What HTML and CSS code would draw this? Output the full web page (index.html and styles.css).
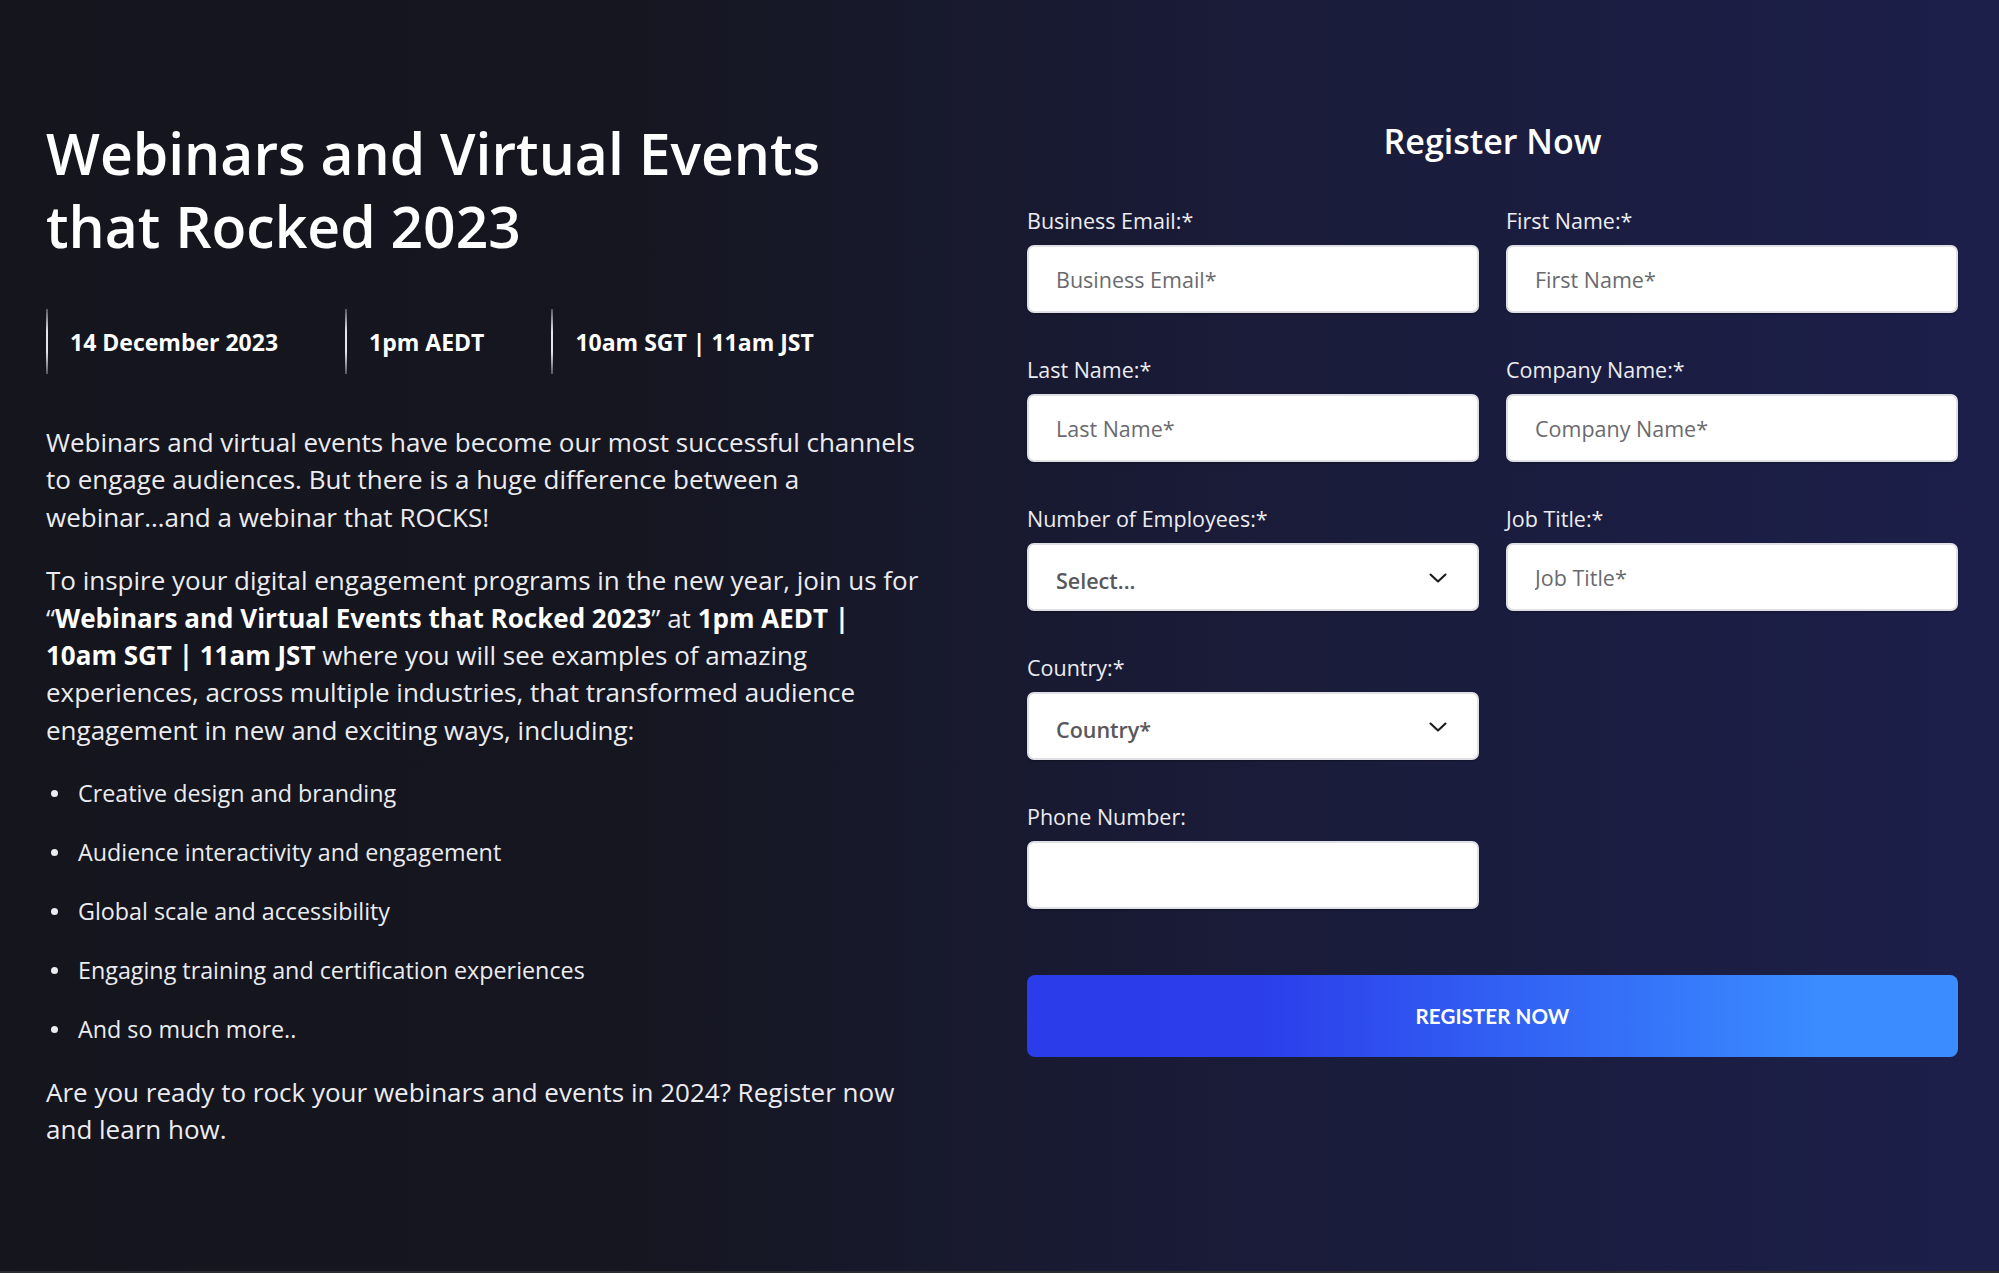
FILE: index.html
```html
<!DOCTYPE html>
<html lang="en">
<head>
<meta charset="utf-8">
<title>Webinars and Virtual Events that Rocked 2023</title>
<link rel="stylesheet" href="styles.css">
</head>
<body>
<main class="page">
  <section class="intro">
    <h1 class="title">Webinars and Virtual Events that Rocked 2023</h1>
    <div class="meta">
      <div class="meta-item">14 December 2023</div>
      <div class="meta-item">1pm AEDT</div>
      <div class="meta-item">10am SGT | 11am JST</div>
    </div>
    <p class="text">Webinars and virtual events have become our most successful channels to engage audiences. But there is a huge difference between a <span class="nowrap">webinar…and</span> a webinar that ROCKS!</p>
    <p class="text">To inspire your digital engagement programs in the new year, join us for “<strong>Webinars and Virtual Events that Rocked 2023</strong>” at <strong>1pm AEDT |</strong><br><strong>10am SGT | 11am JST</strong> where you will see examples of amazing experiences, across multiple industries, that transformed audience engagement in new and exciting ways, including:</p>
    <ul class="list">
      <li>Creative design and branding</li>
      <li>Audience interactivity and engagement</li>
      <li>Global scale and accessibility</li>
      <li>Engaging training and certification experiences</li>
      <li>And so much more..</li>
    </ul>
    <p class="text">Are you ready to rock your webinars and events in 2024? Register now and learn how.</p>
  </section>

  <section class="register">
    <h2 class="register-title">Register Now</h2>
    <form class="form">
      <div class="field">
        <label class="label" for="email">Business Email:*</label>
        <input class="input" id="email" type="email" placeholder="Business Email*">
      </div>
      <div class="field">
        <label class="label" for="first">First Name:*</label>
        <input class="input" id="first" type="text" placeholder="First Name*">
      </div>
      <div class="field">
        <label class="label" for="last">Last Name:*</label>
        <input class="input" id="last" type="text" placeholder="Last Name*">
      </div>
      <div class="field">
        <label class="label" for="company">Company Name:*</label>
        <input class="input" id="company" type="text" placeholder="Company Name*">
      </div>
      <div class="field">
        <label class="label" for="employees">Number of Employees:*</label>
        <div class="select-wrap">
          <select class="input select" id="employees">
            <option>Select...</option>
          </select>
          <svg class="chevron" width="20" height="12" viewBox="0 0 20 12" aria-hidden="true"><path d="M2.5 2.5 L10 9.5 L17.5 2.5" fill="none" stroke="#1a1a1a" stroke-width="2.1" stroke-linecap="round" stroke-linejoin="round"/></svg>
        </div>
      </div>
      <div class="field">
        <label class="label" for="job">Job Title:*</label>
        <input class="input" id="job" type="text" placeholder="Job Title*">
      </div>
      <div class="field">
        <label class="label" for="country">Country:*</label>
        <div class="select-wrap">
          <select class="input select" id="country">
            <option>Country*</option>
          </select>
          <svg class="chevron" width="20" height="12" viewBox="0 0 20 12" aria-hidden="true"><path d="M2.5 2.5 L10 9.5 L17.5 2.5" fill="none" stroke="#1a1a1a" stroke-width="2.1" stroke-linecap="round" stroke-linejoin="round"/></svg>
        </div>
      </div>
      <div class="field field-break">
        <label class="label" for="phone">Phone Number:</label>
        <input class="input" id="phone" type="tel">
      </div>
      <button class="submit" type="button">REGISTER NOW</button>
    </form>
  </section>
</main>
</body>
</html>
```

FILE: styles.css
```css
* {
  box-sizing: border-box;
}

html, body {
  margin: 0;
  padding: 0;
}

body {
  min-height: 1273px;
  background: linear-gradient(90deg, #14151d 0%, #15161f 30%, #191b36 58%, #1c1f4a 100%);
  border-bottom: 2px solid #2a2b31;
  font-family: "Open Sans", "Noto Sans", sans-serif;
  color: #ececf0;
}

.page {
  display: flex;
  gap: 101px;
  padding: 117px 41px 0 46px;
}

.intro {
  flex: 0 0 880px;
}

.title {
  max-width: 830px;
  margin: 0;
  font-size: 57px;
  line-height: 73px;
  font-weight: 600;
  color: #ffffff;
}

.meta {
  display: flex;
  margin: 46px 0 50px;
}

.meta-item {
  display: flex;
  align-items: center;
  height: 65px;
  padding: 0 67px 0 22px;
  border-left: 2px solid #cfd0d6;
  border-image: linear-gradient(180deg, rgba(255,255,255,0.25) 0%, #e6e6ea 35%, #e6e6ea 65%, rgba(255,255,255,0.25) 100%) 1;
  font-size: 23px;
  font-weight: 700;
  color: #ffffff;
}

.text {
  margin: 0 0 26px;
  font-size: 26px;
  line-height: 37.4px;
}

.nowrap {
  white-space: nowrap;
}

.text strong {
  font-weight: 700;
  color: #ffffff;
}

.list {
  list-style: none;
  margin: 0 0 25px;
  padding: 0;
}

.list li {
  display: flex;
  align-items: center;
  font-size: 23.3px;
  line-height: 37.4px;
  margin-bottom: 21.6px;
  padding-left: 5px;
}

.list li:last-child {
  margin-bottom: 0;
}

.list li::before {
  content: "";
  flex: 0 0 7px;
  height: 7px;
  border-radius: 50%;
  background: #ececf0;
  margin-right: 20px;
}

.register {
  flex: 1 1 auto;
}

.register-title {
  margin: 4px 0 45px;
  text-align: center;
  font-size: 34px;
  line-height: 41px;
  font-weight: 600;
  color: #ffffff;
}

.form {
  display: grid;
  grid-template-columns: 1fr 1fr;
  column-gap: 27px;
  row-gap: 43px;
}

.field-break {
  grid-column: 1;
}

.label {
  display: block;
  margin-bottom: 10px;
  font-size: 21.5px;
  line-height: 28px;
  color: #ececf0;
}

.input {
  display: block;
  width: 100%;
  height: 68px;
  padding: 0 27px;
  background: #ffffff;
  border: 2px solid #dfe0e6;
  border-radius: 7px;
  box-shadow: 0 1px 2px rgba(0, 0, 0, 0.35);
  font-family: inherit;
  font-size: 21.5px;
  color: #333;
  outline: none;
}

.input::placeholder {
  color: #6a6a6e;
}

.select-wrap {
  position: relative;
}

.select {
  appearance: none;
  -webkit-appearance: none;
  padding-top: 7px;
  font-weight: 600;
  color: #58585c;
}

.chevron {
  position: absolute;
  right: 31px;
  top: 29px;
  pointer-events: none;
}

.submit {
  grid-column: 1 / -1;
  margin-top: 23px;
  height: 82px;
  border: none;
  border-radius: 8px;
  background: linear-gradient(90deg, #2b3ceb 0%, #2b3eea 25%, #3a8cff 85%, #3a8cff 100%);
  font-family: "Lato", "Open Sans", sans-serif;
  font-size: 20.5px;
  font-weight: 700;
  color: #ffffff;
  letter-spacing: 0.1px;
  cursor: pointer;
}
```
